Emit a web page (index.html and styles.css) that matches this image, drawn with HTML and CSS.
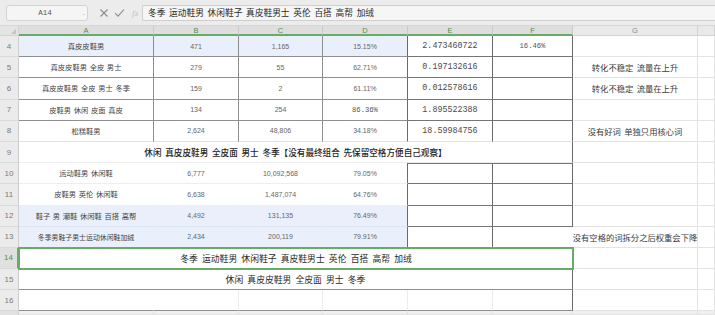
FILE: index.html
```html
<!DOCTYPE html>
<html lang="zh-CN">
<head>
<meta charset="utf-8">
<title>Sheet</title>
<link rel="stylesheet" href="styles.css">
</head>
<body>
<div class="topbar">
  <div class="namebox"><span class="nb-text">A14</span><span class="nb-arrow">-</span></div>
  <div class="fx-icons">
    <svg class="ic" width="10" height="10" viewBox="0 0 10 10"><path d="M1.5 1.5 L8.5 8.5 M8.5 1.5 L1.5 8.5" stroke="#8a8a8a" stroke-width="1.1" fill="none"/></svg>
    <svg class="ic" width="11" height="10" viewBox="0 0 11 10"><path d="M1 5.2 L4 8.2 L10 1.5" stroke="#8a8a8a" stroke-width="1.1" fill="none"/></svg>
    <span class="fx">fx</span>
  </div>
  <div class="formula">冬季 运动鞋男 休闲鞋子 真皮鞋男士 英伦 百搭 高帮 加绒</div>
</div>

<div class="sheet">
  <!-- header -->
  <div class="hd corner"><svg width="5" height="5" viewBox="0 0 5 5"><path d="M5 0 L5 5 L0 5 Z" fill="#c4c4c4"/></svg></div>
  <div class="hd sel-col">A</div>
  <div class="hd sel-col">B</div>
  <div class="hd sel-col">C</div>
  <div class="hd sel-col">D</div>
  <div class="hd sel-col">E</div>
  <div class="hd sel-col">F</div>
  <div class="hd">G</div>
  <div class="hd"></div>

  <!-- row 4 -->
  <div class="rh">4</div>
  <div class="c txt blue dr db">真皮皮鞋男</div>
  <div class="c num blue dr db">471</div>
  <div class="c num blue dr db">1,165</div>
  <div class="c num blue dk db">15.15%</div>
  <div class="c mono dk db2">2.473460722</div>
  <div class="c mono sm dk db2">16.46%</div>
  <div class="c"></div>
  <div class="c"></div>

  <!-- row 5 -->
  <div class="rh">5</div>
  <div class="c txt dr db">真皮皮鞋男 全皮 男士</div>
  <div class="c num dr db">279</div>
  <div class="c num dr db">55</div>
  <div class="c num dk db">62.71%</div>
  <div class="c mono dk db2">0.197132616</div>
  <div class="c dk db2"></div>
  <div class="c note">转化不稳定 流量在上升</div>
  <div class="c"></div>

  <!-- row 6 -->
  <div class="rh">6</div>
  <div class="c txt dr db">真皮皮鞋男 全皮 男士 冬季</div>
  <div class="c num dr db">159</div>
  <div class="c num dr db">2</div>
  <div class="c num dk db">61.11%</div>
  <div class="c mono dk db2">0.012578616</div>
  <div class="c dk db2"></div>
  <div class="c note">转化不稳定 流量在上升</div>
  <div class="c"></div>

  <!-- row 7 -->
  <div class="rh">7</div>
  <div class="c txt dr db">皮鞋男 休闲 皮面 真皮</div>
  <div class="c num dr db">134</div>
  <div class="c num dr db">254</div>
  <div class="c mono sm dk db">86.36%</div>
  <div class="c mono dk db2">1.895522388</div>
  <div class="c dk db2"></div>
  <div class="c"></div>
  <div class="c"></div>

  <!-- row 8 -->
  <div class="rh">8</div>
  <div class="c txt dr">松糕鞋男</div>
  <div class="c num dr">2,624</div>
  <div class="c num dr">48,806</div>
  <div class="c num dk">34.18%</div>
  <div class="c mono dk">18.59984756</div>
  <div class="c dk"></div>
  <div class="c note">没有好词 单独只用核心词</div>
  <div class="c"></div>

  <!-- row 9 -->
  <div class="rh">9</div>
  <div class="c span6 big dk nobb">休闲 真皮皮鞋男 全皮面 男士 冬季【没有最终组合 先保留空格方便自己观察】</div>
  <div class="c"></div>
  <div class="c"></div>

  <!-- row 10 -->
  <div class="rh">10</div>
  <div class="c txt nr faint">运动鞋男 休闲鞋</div>
  <div class="c num nr faint">6,777</div>
  <div class="c num nr faint">10,092,568</div>
  <div class="c num dk faint">79.05%</div>
  <div class="c dk db2 dt"></div>
  <div class="c dk db2 dt"></div>
  <div class="c"></div>
  <div class="c"></div>

  <!-- row 11 -->
  <div class="rh">11</div>
  <div class="c txt nr faint">皮鞋男 英伦 休闲鞋</div>
  <div class="c num nr faint">6,638</div>
  <div class="c num nr faint">1,487,074</div>
  <div class="c num dk faint">64.76%</div>
  <div class="c dk db2"></div>
  <div class="c dk db2"></div>
  <div class="c"></div>
  <div class="c"></div>

  <!-- row 12 -->
  <div class="rh">12</div>
  <div class="c txt blue nrb bfaint">鞋子 男 潮鞋 休闲鞋 百搭 高帮</div>
  <div class="c num blue nrb bfaint">4,492</div>
  <div class="c num blue nrb bfaint">131,135</div>
  <div class="c num blue dk bfaint">76.49%</div>
  <div class="c dk db2"></div>
  <div class="c dk db2"></div>
  <div class="c"></div>
  <div class="c"></div>

  <!-- row 13 -->
  <div class="rh">13</div>
  <div class="c txt blue nrb bfaint tiny">冬季男鞋子男士运动休闲鞋加绒</div>
  <div class="c num blue nrb bfaint">2,434</div>
  <div class="c num blue nrb bfaint">200,119</div>
  <div class="c num blue dk bfaint">79.91%</div>
  <div class="c dk"></div>
  <div class="c nr"></div>
  <div class="c note">没有空格的词拆分之后权重会下降</div>
  <div class="c"></div>

  <!-- row 14 -->
  <div class="rh rh-sel">14</div>
  <div class="c span6 big2 sel">冬季 运动鞋男 休闲鞋子 真皮鞋男士 英伦 百搭 高帮 加绒</div>
  <div class="c"></div>
  <div class="c"></div>

  <!-- row 15 -->
  <div class="rh">15</div>
  <div class="c span6 big2 dk db">休闲 真皮皮鞋男 全皮面 男士 冬季</div>
  <div class="c"></div>
  <div class="c"></div>

  <!-- row 16 -->
  <div class="rh">16</div>
  <div class="c nr db"></div>
  <div class="c lt db"></div>
  <div class="c lt db"></div>
  <div class="c lt db"></div>
  <div class="c lt db"></div>
  <div class="c dk db"></div>
  <div class="c"></div>
  <div class="c"></div>

  <!-- bottom strip -->
  <div class="rh strip"></div>
  <div class="c strip-c"></div>
  <div class="c strip-c"></div>
  <div class="c strip-c"></div>
  <div class="c strip-c"></div>
  <div class="c strip-c"></div>
  <div class="c strip-c"></div>
  <div class="c strip-c"></div>
  <div class="c strip-c"></div>
</div>
</body>
</html>
```

FILE: styles.css
```css
html, body {
  margin: 0;
  padding: 0;
  background: #ffffff;
  overflow: hidden;
  width: 715px;
  height: 315px;
  font-family: "Noto Sans CJK SC", "Noto Sans", sans-serif;
}

.topbar {
  height: 26px;
  box-sizing: border-box;
  background: #ececec;
  border-bottom: 1px solid #d6d6d6;
  display: flex;
  align-items: center;
  padding-left: 6px;
}

.namebox {
  width: 82px;
  height: 16px;
  box-sizing: border-box;
  background: #f5f5f5;
  border: 1px solid #d3d3d3;
  border-radius: 3px;
  display: flex;
  align-items: center;
  justify-content: center;
  position: relative;
}

.nb-text {
  font-family: "Liberation Mono", monospace;
  font-size: 7.5px;
  color: #555;
  margin-right: 4px;
}

.nb-arrow {
  position: absolute;
  right: 2px;
  top: 3px;
  font-size: 7px;
  color: #b5b5b5;
  line-height: 8px;
}

.fx-icons {
  display: flex;
  align-items: center;
  gap: 5px;
  margin-left: 11px;
  width: 43px;
}

.ic {
  display: block;
}

.fx {
  font-family: "Liberation Serif", serif;
  font-style: italic;
  font-size: 9px;
  color: #c2c2c2;
  margin-left: 2px;
}

.formula {
  flex: 1;
  height: 16px;
  box-sizing: border-box;
  background: #f6f6f6;
  border: 1px solid #cfcfcf;
  border-right: none;
  border-radius: 2px 0 0 2px;
  padding-left: 5px;
  font-size: 8.7px;
  word-spacing: 1.8px;
  color: #2a2a2a;
  display: flex;
  align-items: center;
  white-space: nowrap;
}

.sheet {
  display: grid;
  grid-template-columns: 19px 135px 85px 84px 85px 85px 80px 125px 1fr;
  grid-template-rows: 10px repeat(13, 21.2px) 4px;
}

.hd {
  background: #e9e9e9;
  border-right: 1px solid #d2d2d2;
  border-bottom: 1px solid #d2d2d2;
  box-sizing: border-box;
  font-family: "Liberation Sans", sans-serif;
  font-size: 7.5px;
  color: #8a8a8a;
  display: flex;
  align-items: center;
  justify-content: center;
}

.corner {
  background: #e4e4e4;
  align-items: flex-end;
  justify-content: flex-end;
  padding: 0 2px 1px 0;
}

.sel-col {
  background: #dedede;
  color: #4f8f4f;
  border-bottom: 2px solid #69aa69;
  border-right-color: #c9c9c9;
}

.rh {
  background: #ebebeb;
  border-right: 1px solid #cdcdcd;
  border-bottom: 1px solid #d8d8d8;
  box-sizing: border-box;
  font-family: "Liberation Sans", sans-serif;
  font-size: 8px;
  color: #7a7a7a;
  display: flex;
  align-items: center;
  justify-content: center;
}

.rh-sel {
  background: #e0e0e0;
  color: #4a944a;
  border-right: 2px solid #69aa69;
}

.strip {
  background: #e2e2e2;
  border-bottom: none;
}

.strip-c {
  background: #f0f0f0;
  border-bottom: none;
}

.c {
  box-sizing: border-box;
  border-right: 1px solid #e3e3e3;
  border-bottom: 1px solid #e3e3e3;
  display: flex;
  align-items: center;
  justify-content: center;
  white-space: nowrap;
  min-width: 0;
  color: #3a3a3a;
}

.txt {
  font-size: 7.3px;
  color: #444;
  word-spacing: 1px;
}

.tiny {
  font-size: 6.9px;
}

.num {
  font-family: "Liberation Sans", sans-serif;
  font-size: 7px;
  color: #666;
}

.mono {
  font-family: "Liberation Mono", monospace;
  font-size: 8.4px;
  color: #4a4a4a;
  letter-spacing: 0;
}

.mono.sm {
  font-size: 7.2px;
  color: #555;
}

.note {
  font-size: 8.3px;
  color: #3a3a3a;
  word-spacing: 1.6px;
}

.big {
  font-size: 8.6px;
  font-weight: 500;
  color: #1e1e1e;
  word-spacing: 1.8px;
}

.big2 {
  font-size: 8.8px;
  color: #2a2a2a;
  word-spacing: 2.2px;
}

.span6 {
  grid-column: span 6;
}

.blue {
  background: #e9f0fb;
}

.dr {
  border-right-color: #8f8f8f;
}

.dk {
  border-right-color: #6a6a6a;
}

.lt {
  border-right-color: #ececec;
}

.db {
  border-bottom-color: #8f8f8f;
}

.db2 {
  border-bottom-color: #757575;
}

.dt {
  border-top: 1px solid #757575;
}

.nobb {
  border-bottom-color: #eeeeee;
}

.nr {
  border-right-color: #ffffff;
}

.nrb {
  border-right-color: #e9f0fb;
}

.faint {
  border-bottom-color: #eeeeee;
}

.bfaint {
  border-bottom-color: #dde5f1;
}

.sel {
  border: none;
  box-shadow: 0 0 0 1px #6aab6a, inset 0 0 0 1px #6aab6a;
  position: relative;
  z-index: 1;
  background: #ffffff;
}
```
